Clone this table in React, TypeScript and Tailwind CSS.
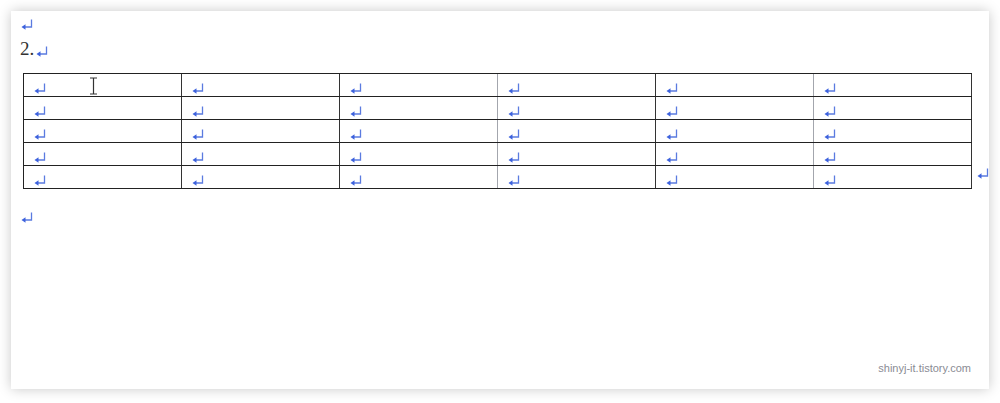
import React from "react";

const Ret = ({ className = "" }: { className?: string }) => (
    <svg className={`block shrink-0 ${className}`} width="12" height="12" viewBox="0 0 12 12">
        <path d="M10.5 0.5V8H3.5" stroke="#5b7be0" strokeWidth="1.3" fill="none" />
        <path d="M0.5 8L4.5 5.2V10.8Z" fill="#3d62dd" />
    </svg>
);

const COLS = 6;
const ROWS = 5;
const GRAY_COLS = [3, 5]; // borders that render lighter in the screenshot

const App = () => {
    return (
        <div className="w-[1000px] h-[403px] bg-white pt-[11px] pl-[11px]">
            <div className="w-[978px] h-[378px] bg-white shadow-[0_0_12px_rgba(0,0,0,0.22)] flex flex-col pt-[8px] pl-[9px] font-['Liberation_Serif',serif]">
                {/* empty paragraph */}
                <div className="h-[18px]">
                    <Ret className="ml-[1px]" />
                </div>
                {/* numbered item */}
                <div className="h-[24px] flex items-end">
                    <span className="text-[19px] leading-[24px] text-[#333]">2.</span>
                    <Ret className="mb-[3px] ml-[2px]" />
                </div>
                {/* table */}
                <div className="flex items-end mt-[12px] ml-[3px]">
                    <div className="w-[949px] shrink-0 border-t border-l border-[#222]">
                        {Array.from({ length: ROWS }).map((_, r) => (
                            <div key={r} className="flex h-[23px] border-b border-[#222]">
                                {Array.from({ length: COLS }).map((_, c) => (
                                    <div
                                        key={c}
                                        className={`relative w-[158px] flex items-end pl-[10px] pb-[1px] border-r ${GRAY_COLS.includes(c + 1) ? "border-[#a3a6ad]" : "border-[#333]"}`}
                                    >
                                        <Ret />
                                        {r === 0 && c === 0 && (
                                            // text cursor
                                            <svg className="absolute left-[65px] top-[3px]" width="9" height="18" viewBox="0 0 9 18">
                                                <path d="M1 1H8M4.5 1V17M1 17H8" stroke="#333" strokeWidth="1.2" fill="none" />
                                            </svg>
                                        )}
                                    </div>
                                ))}
                            </div>
                        ))}
                    </div>
                    <Ret className="ml-[5px] mb-[9px]" />
                </div>
                {/* trailing paragraph */}
                <div className="mt-[23px] ml-[1px]">
                    <Ret />
                </div>
                <div className="mt-auto mb-[13px] pr-[18px] flex justify-end">
                    <span className="font-['Liberation_Sans',sans-serif] text-[11px] text-[#8a8c94]">shinyj-it.tistory.com</span>
                </div>
            </div>
        </div>
    );
};

export default App;
